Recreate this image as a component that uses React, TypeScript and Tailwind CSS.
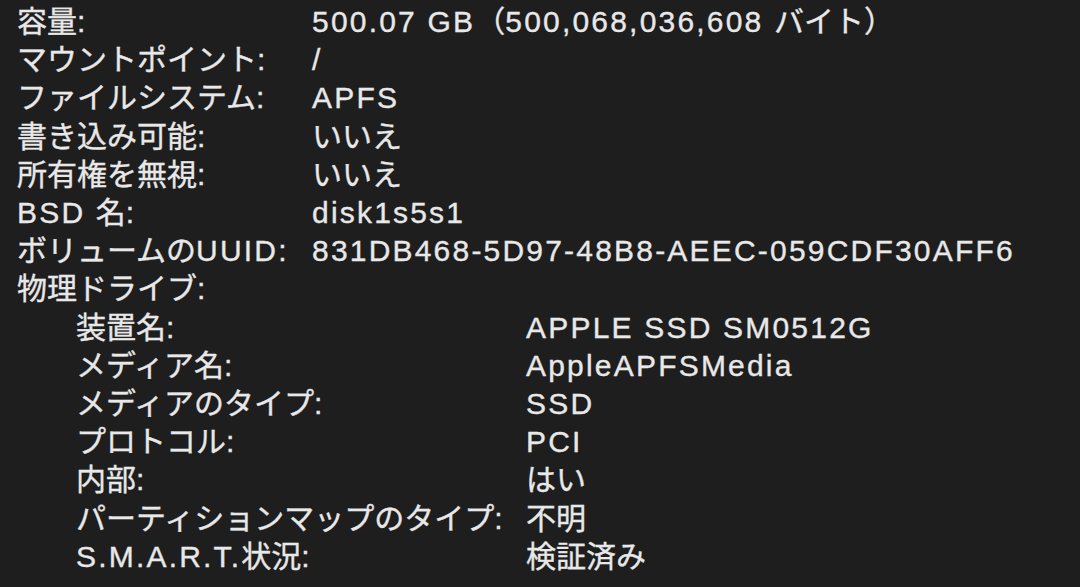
/**
 * Storage volume detail pane (System Information, ja-JP, dark).
 * Two-column key/value list, with the physical drive block indented below.
 */
import type { ReactNode } from "react";

type Row = { label: string; value: string };

const VOLUME: Row[] = [
  { label: "容量:", value: "500.07 GB（500,068,036,608 バイト）" },
  { label: "マウントポイント:", value: "/" },
  { label: "ファイルシステム:", value: "APFS" },
  { label: "書き込み可能:", value: "いいえ" },
  { label: "所有権を無視:", value: "いいえ" },
  { label: "BSD 名:", value: "disk1s5s1" },
  { label: "ボリュームのUUID:", value: "831DB468-5D97-48B8-AEEC-059CDF30AFF6" },
];

const DRIVE: Row[] = [
  { label: "装置名:", value: "APPLE SSD SM0512G" },
  { label: "メディア名:", value: "AppleAPFSMedia" },
  { label: "メディアのタイプ:", value: "SSD" },
  { label: "プロトコル:", value: "PCI" },
  { label: "内部:", value: "はい" },
  { label: "パーティションマップのタイプ:", value: "不明" },
  { label: "S.M.A.R.T.状況:", value: "検証済み" },
];

const CJK = /[\u3000-\u9fff\uff00-\uffef]/;

// latin runs get a little tracking so they sit as wide as the mac's Hiragino latin
function Txt({ s }: { s: string }) {
  const parts = s.split(/([\u3000-\u9fff\uff00-\uffef]+)/).filter(Boolean);
  const out: ReactNode[] = parts.map((p, i) =>
    CJK.test(p) ? (
      <span key={i}>{p}</span>
    ) : (
      <span key={i} className="tracking-[2.2px]">
        {p}
      </span>
    )
  );
  return <>{out}</>;
}

function KV({ r, cols }: { r: Row; cols: string }) {
  return (
    <div className={`grid whitespace-nowrap ${cols}`}>
      <span>
        <Txt s={r.label} />
      </span>
      <span>
        <Txt s={r.value} />
      </span>
    </div>
  );
}

export default function App() {
  return (
    <div className="h-[587px] w-[1080px] overflow-hidden bg-[#1e1e1e] pt-[3px] font-['Liberation_Sans','Noto_Sans_CJK_JP',sans-serif] text-[30px] leading-[38.2px] text-[#e8e8e8] [-webkit-text-stroke:0.35px_#e8e8e8]">
      <div className="pl-[17px]">
        {VOLUME.map((r) => (
          <KV key={r.label} r={r} cols="grid-cols-[295px_1fr]" />
        ))}
        <div className="whitespace-nowrap">
          <Txt s="物理ドライブ:" />
        </div>
      </div>
      <div className="pl-[76px]">
        {DRIVE.map((r) => (
          <KV key={r.label} r={r} cols="grid-cols-[450px_1fr]" />
        ))}
      </div>
    </div>
  );
}
